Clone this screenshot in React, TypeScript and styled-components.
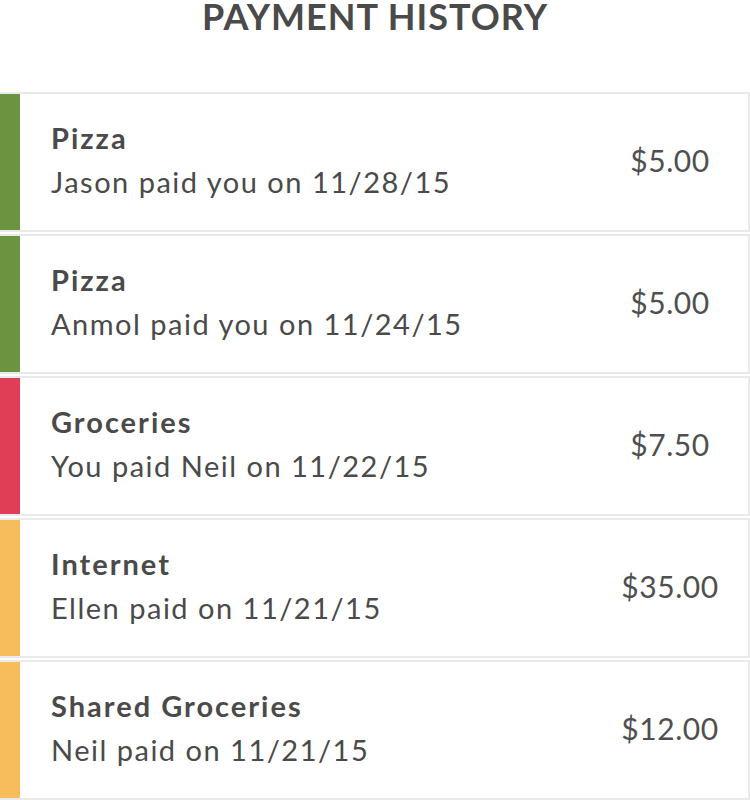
import React from "react";
import styled, { createGlobalStyle } from "styled-components";

const GlobalStyle = createGlobalStyle`
  html, body {
    margin: 0;
    padding: 0;
    background: #ffffff;
  }
  body {
    font-family: Lato, "Open Sans", "Noto Sans", sans-serif;
    color: #4a4a4a;
    width: 750px;
    height: 800px;
    overflow: hidden;
  }
`;

const Page = styled.div`
  width: 750px;
  display: flex;
  flex-direction: column;
`;

const Header = styled.h1`
  margin: 0;
  height: 92px;
  box-sizing: border-box;
  text-align: center;
  font-size: 36px;
  line-height: 32px;
  font-weight: 700;
  letter-spacing: 1px;
  color: #4a4a4a;
`;

const List = styled.div`
  display: flex;
  flex-direction: column;
  gap: 2px;
`;

const Card = styled.div`
  display: flex;
  height: 140px;
  box-sizing: border-box;
  border: 2px solid #eaeaea;
  border-left: none;
  background: #ffffff;
`;

const ColorBar = styled.div<{ $color: string }>`
  width: 20px;
  flex: none;
  background: ${(p) => p.$color};
`;

const Info = styled.div`
  flex: 1;
  display: flex;
  flex-direction: column;
  justify-content: center;
  padding-left: 31px;
  padding-bottom: 4px;
`;

const Title = styled.div`
  font-size: 29px;
  line-height: 44px;
  font-weight: 700;
  letter-spacing: 2px;
  color: #4a4a4a;
`;

const Subtitle = styled.div`
  font-size: 29px;
  line-height: 44px;
  font-weight: 400;
  letter-spacing: 1.5px;
  color: #4a4a4a;
`;

const Amount = styled.div`
  width: 140px;
  flex: none;
  margin-right: 8px;
  display: flex;
  align-items: center;
  justify-content: center;
  padding-bottom: 4px;
  font-size: 30px;
  font-weight: 400;
  letter-spacing: 0.6px;
  color: #4f4f4f;
`;

type Payment = { title: string; detail: string; amount: string; color: string };

const GREEN = "#6a9440";
const RED = "#e03e57";
const YELLOW = "#f7bc5c";

const payments: Payment[] = [
  { title: "Pizza", detail: "Jason paid you on 11/28/15", amount: "$5.00", color: GREEN },
  { title: "Pizza", detail: "Anmol paid you on 11/24/15", amount: "$5.00", color: GREEN },
  { title: "Groceries", detail: "You paid Neil on 11/22/15", amount: "$7.50", color: RED },
  { title: "Internet", detail: "Ellen paid on 11/21/15", amount: "$35.00", color: YELLOW },
  { title: "Shared Groceries", detail: "Neil paid on 11/21/15", amount: "$12.00", color: YELLOW },
];

export default function App() {
  return (
    <Page>
      <GlobalStyle />
      <Header>PAYMENT HISTORY</Header>
      <List>
        {payments.map((p, i) => (
          <Card key={i}>
            <ColorBar $color={p.color} />
            <Info>
              <Title>{p.title}</Title>
              <Subtitle>{p.detail}</Subtitle>
            </Info>
            <Amount>{p.amount}</Amount>
          </Card>
        ))}
      </List>
    </Page>
  );
}
